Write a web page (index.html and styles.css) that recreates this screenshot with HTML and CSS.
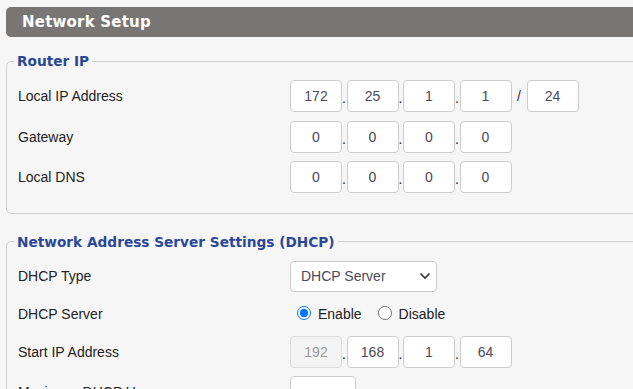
FILE: index.html
```html
<!DOCTYPE html>
<html lang="en">
<head>
	<meta charset="UTF-8">
	<title>Network Setup</title>
	<link rel="stylesheet" href="styles.css">
</head>
<body>
	<div class="page">
		<div class="title">Network Setup</div>

		<fieldset class="group">
			<legend>Router IP</legend>
			<div class="row">
				<label>Local IP Address</label>
				<div class="ip">
					<input type="text" value="172"><span class="sep">.</span>
					<input type="text" value="25"><span class="sep">.</span>
					<input type="text" value="1"><span class="sep">.</span>
					<input type="text" value="1"><span class="slash">/</span>
					<input type="text" value="24">
				</div>
			</div>
			<div class="row">
				<label>Gateway</label>
				<div class="ip">
					<input type="text" value="0"><span class="sep">.</span>
					<input type="text" value="0"><span class="sep">.</span>
					<input type="text" value="0"><span class="sep">.</span>
					<input type="text" value="0">
				</div>
			</div>
			<div class="row">
				<label>Local DNS</label>
				<div class="ip">
					<input type="text" value="0"><span class="sep">.</span>
					<input type="text" value="0"><span class="sep">.</span>
					<input type="text" value="0"><span class="sep">.</span>
					<input type="text" value="0">
				</div>
			</div>
		</fieldset>

		<fieldset class="group">
			<legend>Network Address Server Settings (DHCP)</legend>
			<div class="row">
				<label>DHCP Type</label>
				<select class="pick">
					<option>DHCP Server</option>
					<option>DHCP Relay</option>
				</select>
			</div>
			<div class="row radios">
				<label>DHCP Server</label>
				<div class="opts">
					<label class="opt"><input type="radio" name="dhcp" checked>Enable</label>
					<label class="opt"><input type="radio" name="dhcp">Disable</label>
				</div>
			</div>
			<div class="row">
				<label>Start IP Address</label>
				<div class="ip">
					<input type="text" value="192" disabled><span class="sep">.</span>
					<input type="text" value="168"><span class="sep">.</span>
					<input type="text" value="1"><span class="sep">.</span>
					<input type="text" value="64">
				</div>
			</div>
			<div class="row">
				<label>Maximum DHCP Users</label>
				<div class="ip">
					<input type="text" class="wide" value="">
				</div>
			</div>
		</fieldset>
	</div>
</body>
</html>
```

FILE: styles.css
```css
*{
	box-sizing: border-box;
}
body{
	margin: 7px 0 0 6px;
	background: #f6f6f6;
	font-family: "Liberation Sans", Arial, sans-serif;
	font-size: 14px;
	color: #222;
	overflow: hidden;
}
.page{
	width: 720px;
}
.title{
	height: 30px;
	padding-left: 16px;
	background: #787674;
	border-radius: 5px;
	color: #fff;
	font-family: "DejaVu Sans", Verdana, sans-serif;
	font-weight: bold;
	font-size: 15px;
	letter-spacing: 0.2px;
	line-height: 30px;
}
.group{
	margin: 16px 0 0;
	padding: 11px 11px 11px;
	border: 1px solid #cfcfcf;
	border-radius: 5px;
}
.group + .group{
	margin-top: 20px;
}
.group legend{
	margin-left: -4px;
	padding: 0 3px;
	color: #2b4799;
	font-family: "DejaVu Sans", Verdana, sans-serif;
	font-weight: bold;
	font-size: 13.7px;
}
.row{
	display: flex;
	align-items: center;
	margin-bottom: 8.5px;
}
.row > label{
	width: 272px;
	flex: none;
}
.ip{
	display: flex;
	align-items: center;
}
.ip input{
	width: 52px;
	height: 32px;
	padding: 0;
	border: 1px solid #ccc;
	border-radius: 4px;
	background: #fff;
	font-family: "Liberation Sans", Arial, sans-serif;
	font-size: 14px;
	color: #4a4a58;
	text-align: center;
}
.ip input:disabled{
	background: #f3f3f3;
	border-color: #ddd;
	color: #9a9a9a;
}
.ip input.wide{
	width: 66px;
}
.sep{
	width: 4.5px;
	align-self: flex-end;
	padding-bottom: 7px;
	line-height: 14px;
	color: #222;
}
.slash{
	width: 15px;
	text-align: center;
	color: #333;
}
.pick{
	width: 147px;
	height: 31px;
	padding: 0 10px;
	border: 1px solid #ccc;
	border-radius: 4px;
	background: #fff url("data:image/svg+xml;utf8,<svg xmlns='http://www.w3.org/2000/svg' width='12' height='8' viewBox='0 0 12 8'><path d='M1.5 1.5 L6 6 L10.5 1.5' fill='none' stroke='%23333' stroke-width='1.6'/></svg>") no-repeat right 5px center;
	-webkit-appearance: none;
	appearance: none;
	font-family: "Liberation Sans", Arial, sans-serif;
	font-size: 14px;
	color: #4a4a58;
}
.radios{
	height: 27px;
}
.opts{
	display: flex;
	align-items: center;
}
.opt{
	display: flex;
	align-items: center;
	margin-right: 9px;
}
.opt input{
	width: 14px;
	height: 14px;
	margin: 0 7px 2px 7px;
}
```
